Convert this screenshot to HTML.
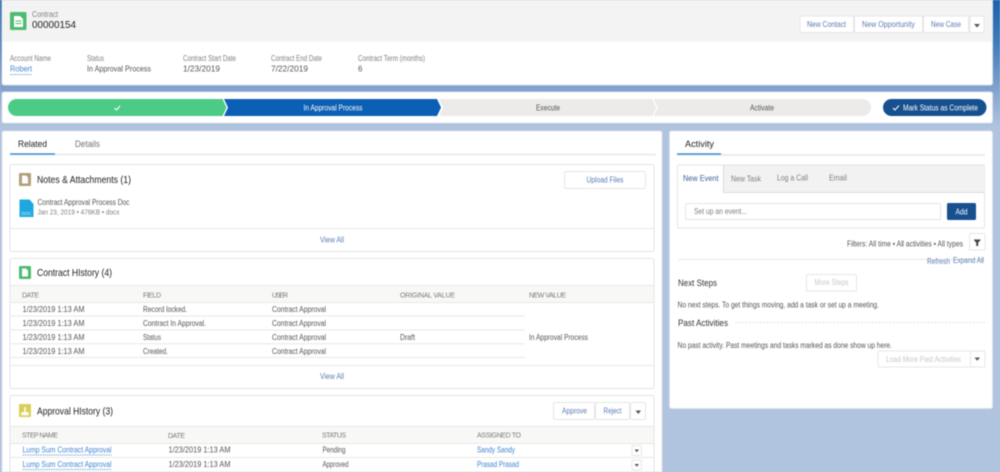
<!DOCTYPE html>
<html><head><meta charset="utf-8"><title>Contract 00000154</title>
<style>
html,body{margin:0;padding:0;width:1000px;height:472px;overflow:hidden;background:#b0c4df}
svg{display:block;filter:blur(.4px)}
text{font-family:"Liberation Sans",sans-serif;font-size:8px;fill:#555}
.lab{fill:#808080}
.h{font-size:7px;fill:#7a7a7a}
.lnk{fill:#3f86d2}
.bl{fill:#5a7db4}
.t{font-size:10.500px;fill:#1d1d1d}
.dis{fill:#c8c8c8}
.card{fill:#fff;stroke:#e4e4e4;stroke-width:1}
.btn{fill:#fff;stroke:#e6e6e6;stroke-width:1}
.ln{stroke:#e8e8e8;stroke-width:1}
.c{text-anchor:middle}
</style></head><body>
<svg width="1000" height="472" viewBox="0 0 1000 472" xmlns="http://www.w3.org/2000/svg">
<defs>
<linearGradient id="bg" x1="0" y1="0" x2="0" y2="1"><stop offset="0" stop-color="#1c62aa"/><stop offset=".09" stop-color="#3f7cbc"/><stop offset=".18" stop-color="#7d9fcc"/><stop offset=".27" stop-color="#b0c4df"/><stop offset="1" stop-color="#b0c4df"/></linearGradient>
</defs>
<rect width="1000" height="472" fill="url(#bg)"/>

<!-- header card -->
<rect x="2" y="-3" width="990.500" height="88" rx="2" fill="#fff" stroke="#dfe2e8"/>
<path d="M2.500 -3H992V41.500H2.500Z" fill="#f3f3f3"/>
<rect x="10" y="12" width="16.500" height="18" rx="1.500" fill="#4fbb70"/>
<path d="M14 16h6l3 3v8h-9z" fill="#fff"/><path d="M15.500 21h6M15.500 23.500h6" stroke="#4fbb70" stroke-width="1"/>
<text x="32" y="17" class="lab" textLength="26" lengthAdjust="spacingAndGlyphs">Contract</text>
<text x="32" y="28" style="font-size:10.500px;fill:#222" textLength="44" lengthAdjust="spacingAndGlyphs">00000154</text>
<rect x="800" y="16" width="53.500" height="16.500" class="btn"/>
<rect x="854.500" y="16" width="68" height="16.500" class="btn"/>
<rect x="923.500" y="16" width="45" height="16.500" class="btn"/>
<rect x="970" y="16" width="14" height="16.500" class="btn"/>
<text x="807" y="27" class="bl" textLength="39" lengthAdjust="spacingAndGlyphs">New Contact</text>
<text x="862" y="27" class="bl" textLength="53" lengthAdjust="spacingAndGlyphs">New Opportunity</text>
<text x="931" y="27" class="bl" textLength="30" lengthAdjust="spacingAndGlyphs">New Case</text>
<path d="M974 24h6l-3 3.500z" fill="#555"/>

<text x="10" y="61" class="lab" textLength="41" lengthAdjust="spacingAndGlyphs">Account Name</text>
<text x="87" y="61" class="lab" textLength="17" lengthAdjust="spacingAndGlyphs">Status</text>
<text x="183" y="61" class="lab" textLength="53" lengthAdjust="spacingAndGlyphs">Contract Start Date</text>
<text x="271" y="61" class="lab" textLength="51" lengthAdjust="spacingAndGlyphs">Contract End Date</text>
<text x="358" y="61" class="lab" textLength="67" lengthAdjust="spacingAndGlyphs">Contract Term (months)</text>
<text x="10" y="71.500" class="lnk" textLength="22" lengthAdjust="spacingAndGlyphs">Robert</text>
<path d="M10 74.500h22" stroke="#5a93d6" stroke-width=".8" stroke-dasharray="1.500 .7"/>
<text x="87" y="71.500" textLength="64" lengthAdjust="spacingAndGlyphs">In Approval Process</text>
<text x="183" y="71.500" textLength="37" lengthAdjust="spacingAndGlyphs">1/23/2019</text>
<text x="271" y="71.500" textLength="37" lengthAdjust="spacingAndGlyphs">7/22/2019</text>
<text x="358" y="71.500">6</text>

<!-- path card -->
<rect x="2" y="92" width="990.500" height="31" rx="2" fill="#fff" stroke="#dfe2e8"/>
<path d="M16.500 99H222.500L226.500 107.500L222.500 116H16.500A8.500 8.500 0 0 1 16.500 99Z" fill="#4bcb85"/>
<path d="M224 99H437L441 107.500L437 116H224L228 107.500Z" fill="#0b5fb4"/>
<path d="M439 99H862.500A8.500 8.500 0 0 1 862.500 116H439L443 107.500Z" fill="#ecebea"/>
<path d="M653 99L657 107.500L653 116" fill="none" stroke="#fff" stroke-width="1.200"/>
<path d="M114.500 108l2 2 3.500-4" fill="none" stroke="#fff" stroke-width="1"/>
<text x="333" y="110.500" class="c" style="fill:#fff" textLength="59" lengthAdjust="spacingAndGlyphs">In Approval Process</text>
<text x="548" y="110.500" class="c" textLength="24" lengthAdjust="spacingAndGlyphs">Execute</text>
<text x="762" y="110.500" class="c" textLength="24" lengthAdjust="spacingAndGlyphs">Activate</text>
<rect x="883" y="99" width="103.500" height="17" rx="8.500" fill="#16508f"/>
<path d="M893 108l2 2 4-4.500" fill="none" stroke="#fff" stroke-width="1"/>
<text x="903" y="110.500" style="fill:#fff" textLength="75" lengthAdjust="spacingAndGlyphs">Mark Status as Complete</text>

<!-- left main card -->
<rect x="2" y="131" width="660" height="345" rx="2" fill="#fff" stroke="#dfe2e8"/>
<text x="18" y="147" style="font-size:9px;fill:#222" textLength="29" lengthAdjust="spacingAndGlyphs">Related</text>
<text x="75" y="147" style="font-size:9px;fill:#707070" textLength="25" lengthAdjust="spacingAndGlyphs">Details</text>
<path d="M10 154.500H656" stroke="#e8e8e8" stroke-width="1.500"/>
<path d="M10 154H55" stroke="#1f7fd0" stroke-width="1.200"/>

<!-- notes -->
<rect x="10" y="164.500" width="644" height="87" rx="2" class="card"/>
<rect x="19" y="173" width="12" height="13" rx="1" fill="#b29f7b"/>
<path d="M22 175.500h4l2 2v6h-6z" fill="#fff"/>
<text x="37" y="183" class="t" textLength="94" lengthAdjust="spacingAndGlyphs">Notes &amp; Attachments (1)</text>
<rect x="564.500" y="171.500" width="81" height="17" rx="1.500" class="btn"/>
<text x="605" y="182.500" class="c bl" textLength="37" lengthAdjust="spacingAndGlyphs">Upload Files</text>
<path d="M19.500 199.500h10l4 4.500v13h-14z" fill="#1fa8e0"/>
<text x="21.500" y="215" style="font-size:4.500px;fill:#cfeefb">DOC</text>
<text x="37.500" y="205" textLength="92" lengthAdjust="spacingAndGlyphs">Contract Approval Process Doc</text>
<text x="37.500" y="214.500" class="lab" style="font-size:7.500px" textLength="82" lengthAdjust="spacingAndGlyphs">Jan 23, 2019 • 476KB • docx</text>
<path d="M10 228.500H654" class="ln"/>
<text x="332" y="242.500" class="c bl" textLength="24" lengthAdjust="spacingAndGlyphs">View All</text>

<!-- contract history -->
<rect x="10" y="258.500" width="644" height="130" rx="2" class="card"/>
<rect x="19" y="266" width="12" height="13" rx="1" fill="#4fbb70"/>
<path d="M22 268.500h4l2 2v6h-6z" fill="#fff"/>
<text x="37" y="276" class="t" textLength="75" lengthAdjust="spacingAndGlyphs">Contract HIstory (4)</text>
<rect x="10.500" y="286" width="643" height="16" fill="#f8f8f6"/>
<path d="M10 285.500H654M10 302.500H654" class="ln"/>
<text x="22" y="297.500" class="h" textLength="17" lengthAdjust="spacing">DATE</text>
<text x="143" y="297.500" class="h" textLength="18" lengthAdjust="spacing">FIELD</text>
<text x="272" y="297.500" class="h" textLength="16" lengthAdjust="spacing">USER</text>
<text x="400" y="297.500" class="h" textLength="55" lengthAdjust="spacing">ORIGINAL VALUE</text>
<text x="529" y="297.500" class="h" textLength="37" lengthAdjust="spacing">NEW VALUE</text>
<path d="M10 316H525M10 330H525M10 343.800H525M10 357.500H525" class="ln"/>
<text x="22.500" y="312" textLength="62" lengthAdjust="spacingAndGlyphs">1/23/2019 1:13 AM</text>
<text x="143" y="312" textLength="44" lengthAdjust="spacingAndGlyphs">Record locked.</text>
<text x="272" y="312" textLength="54" lengthAdjust="spacingAndGlyphs">Contract Approval</text>
<text x="22.500" y="326" textLength="62" lengthAdjust="spacingAndGlyphs">1/23/2019 1:13 AM</text>
<text x="143" y="326" textLength="63" lengthAdjust="spacingAndGlyphs">Contract In Approval.</text>
<text x="272" y="326" textLength="54" lengthAdjust="spacingAndGlyphs">Contract Approval</text>
<text x="22.500" y="340" textLength="62" lengthAdjust="spacingAndGlyphs">1/23/2019 1:13 AM</text>
<text x="143" y="340" textLength="18" lengthAdjust="spacingAndGlyphs">Status</text>
<text x="272" y="340" textLength="54" lengthAdjust="spacingAndGlyphs">Contract Approval</text>
<text x="400" y="340" textLength="15" lengthAdjust="spacingAndGlyphs">Draft</text>
<text x="529" y="340" textLength="59" lengthAdjust="spacingAndGlyphs">In Approval Process</text>
<text x="22.500" y="354" textLength="62" lengthAdjust="spacingAndGlyphs">1/23/2019 1:13 AM</text>
<text x="143" y="354" textLength="25" lengthAdjust="spacingAndGlyphs">Created.</text>
<text x="272" y="354" textLength="54" lengthAdjust="spacingAndGlyphs">Contract Approval</text>
<path d="M10 365.500H654" class="ln"/>
<text x="332" y="379" class="c bl" textLength="24" lengthAdjust="spacingAndGlyphs">View All</text>

<!-- approval history -->
<rect x="10" y="395.500" width="644" height="85" rx="2" class="card"/>
<rect x="19" y="404" width="12" height="13" rx="1" fill="#d9cf58"/>
<path d="M22 413h6v1.500h-6zM25 407v6" stroke="#fff" stroke-width="1.500"/>
<text x="37" y="414.500" class="t" textLength="76" lengthAdjust="spacingAndGlyphs">Approval HIstory (3)</text>
<rect x="553.500" y="402.500" width="41" height="17" rx="1.500" class="btn"/>
<rect x="595.500" y="402.500" width="34" height="17" rx="1.500" class="btn"/>
<rect x="630.500" y="402.500" width="15" height="17" rx="1.500" class="btn"/>
<text x="562" y="413.500" class="bl" textLength="25" lengthAdjust="spacingAndGlyphs">Approve</text>
<text x="603.500" y="413.500" class="bl" textLength="18" lengthAdjust="spacingAndGlyphs">Reject</text>
<path d="M635.500 410.500h5.500l-2.700 3.500z" fill="#555"/>
<rect x="10.500" y="427" width="643" height="16" fill="#f8f8f6"/>
<path d="M10 426.500H654M10 443.500H654M10 457.500H654" class="ln"/>
<text x="22" y="437.500" class="h" textLength="36" lengthAdjust="spacing">STEP NAME</text>
<text x="168" y="438" class="h" textLength="17" lengthAdjust="spacing">DATE</text>
<text x="322" y="437.500" class="h" textLength="24" lengthAdjust="spacing">STATUS</text>
<text x="477" y="437.500" class="h" textLength="44" lengthAdjust="spacing">ASSIGNED TO</text>
<text x="22.500" y="452.500" class="lnk" textLength="89" lengthAdjust="spacingAndGlyphs">Lump Sum Contract Approval</text>
<path d="M22.500 455h89" stroke="#5a93d6" stroke-width=".8" stroke-dasharray="1.500 .7"/>
<text x="168.500" y="452.500" textLength="62" lengthAdjust="spacingAndGlyphs">1/23/2019 1:13 AM</text>
<text x="322.500" y="452.500" textLength="23" lengthAdjust="spacingAndGlyphs">Pending</text>
<text x="477" y="452.500" class="lnk" textLength="38" lengthAdjust="spacingAndGlyphs">Sandy Sandy</text>
<rect x="632" y="445.500" width="9.500" height="10" rx="1" class="btn"/>
<path d="M634.500 449.500h4.500l-2.200 2.800z" fill="#555"/>
<text x="22.500" y="467" class="lnk" textLength="89" lengthAdjust="spacingAndGlyphs">Lump Sum Contract Approval</text>
<path d="M22.500 469.500h89" stroke="#5a93d6" stroke-width=".8" stroke-dasharray="1.500 .7"/>
<text x="168.500" y="467" textLength="62" lengthAdjust="spacingAndGlyphs">1/23/2019 1:13 AM</text>
<text x="322.500" y="467" textLength="26" lengthAdjust="spacingAndGlyphs">Approved</text>
<text x="477" y="467" class="lnk" textLength="42" lengthAdjust="spacingAndGlyphs">Prasad Prasad</text>
<rect x="632" y="460" width="9.500" height="10" rx="1" class="btn"/>
<path d="M634.500 464h4.500l-2.200 2.800z" fill="#555"/>

<!-- right card -->
<rect x="669.500" y="131" width="323" height="277.500" rx="2" fill="#fff" stroke="#dfe2e8"/>
<text x="685" y="147" style="font-size:9px;fill:#222" textLength="29" lengthAdjust="spacingAndGlyphs">Activity</text>
<path d="M677 155H985" stroke="#e8e8e8" stroke-width="1.500"/>
<path d="M677 154H721" stroke="#1f7fd0" stroke-width="1.200"/>
<rect x="677.500" y="165" width="307" height="63" rx="1.500" class="card"/>
<path d="M723.500 165.500H984.500V192.500H723.500Z" fill="#f2f2f2"/>
<path d="M723.500 165V192.500H984.500" fill="none" stroke="#dcdcdc"/>
<text x="683" y="181" style="fill:#3a5f9a" textLength="35.500" lengthAdjust="spacingAndGlyphs">New Event</text>
<text x="731" y="181.500" class="lab" textLength="30" lengthAdjust="spacingAndGlyphs">New Task</text>
<text x="777" y="180.500" class="lab" textLength="31" lengthAdjust="spacingAndGlyphs">Log a Call</text>
<text x="829" y="180.500" class="lab" textLength="18" lengthAdjust="spacingAndGlyphs">Email</text>
<rect x="685.500" y="203.500" width="255" height="16" rx="1.500" class="btn"/>
<text x="694" y="214" class="lab" textLength="53" lengthAdjust="spacingAndGlyphs">Set up an event...</text>
<rect x="947" y="203" width="29" height="17" rx="1.500" fill="#16508f"/>
<text x="961.500" y="214.500" class="c" style="fill:#fff" textLength="12" lengthAdjust="spacingAndGlyphs">Add</text>
<text x="847" y="246.500" textLength="116" lengthAdjust="spacingAndGlyphs">Filters: All time • All activities • All types</text>
<rect x="969.500" y="233.500" width="15.500" height="16.500" rx="1" class="btn"/>
<path d="M973.500 239.500h7.500l-2.800 3.200v3.300h-2v-3.300z" fill="#444"/>
<path d="M678 259.500H984" class="ln"/>
<text x="927" y="264" class="bl" textLength="23" lengthAdjust="spacingAndGlyphs">Refresh</text>
<text x="953" y="263" class="bl" textLength="31" lengthAdjust="spacingAndGlyphs">Expand All</text>
<text x="678" y="286" style="font-size:9px;fill:#333" textLength="39" lengthAdjust="spacingAndGlyphs">Next Steps</text>
<rect x="806.500" y="274.500" width="50" height="16.500" rx="1.500" class="btn"/>
<text x="831.500" y="285" class="c dis" textLength="34" lengthAdjust="spacingAndGlyphs">More Steps</text>
<text x="677.500" y="307.500" textLength="201.500" lengthAdjust="spacingAndGlyphs">No next steps. To get things moving, add a task or set up a meeting.</text>
<text x="678" y="326" style="font-size:9px;fill:#333" textLength="50" lengthAdjust="spacingAndGlyphs">Past Activities</text>
<path d="M735 322.500H985" stroke="#d4d4d4" stroke-width=".8" stroke-dasharray="2 1.500"/>
<text x="677.500" y="348" textLength="214.500" lengthAdjust="spacingAndGlyphs">No past activity. Past meetings and tasks marked as done show up here.</text>
<rect x="878" y="351" width="107" height="16" rx="1.500" class="btn"/>
<path d="M970.500 351v16" class="ln"/>
<text x="886" y="362" class="dis" textLength="75" lengthAdjust="spacingAndGlyphs">Load More Past Activities</text>
<path d="M974.500 357.500h5.500l-2.700 3.200z" fill="#555"/>
</svg>
</body></html>
